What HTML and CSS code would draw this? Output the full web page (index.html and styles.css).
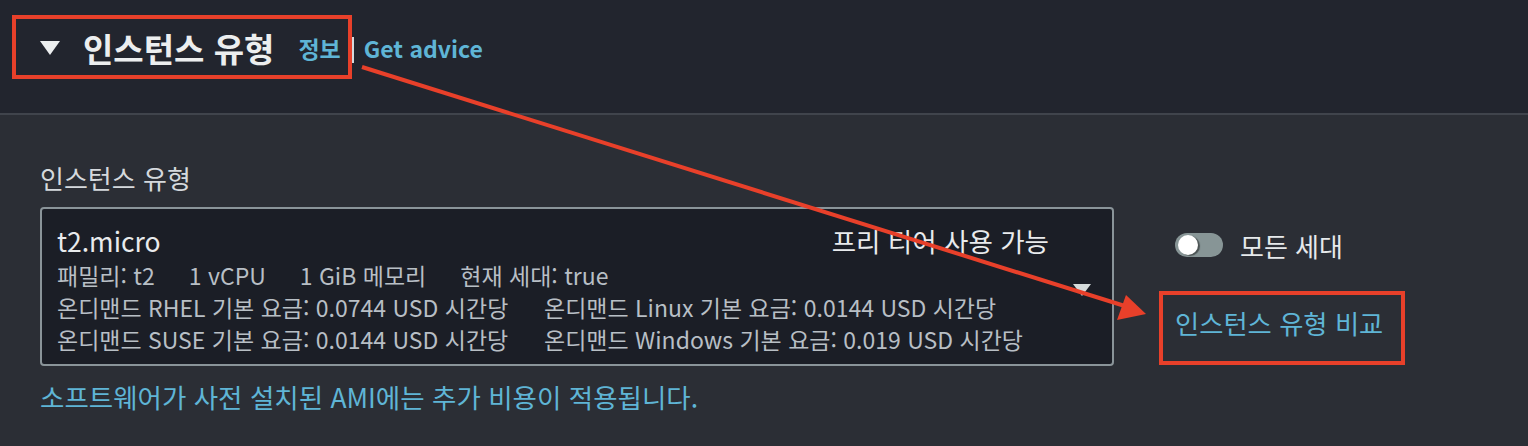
FILE: index.html
```html
<!DOCTYPE html>
<html lang="ko">
<head>
<meta charset="utf-8">
<title>인스턴스 유형</title>
<link rel="stylesheet" href="styles.css">
</head>
<body>
<div class="page">
  <header class="hd">
    <svg class="hd-caret" width="20" height="14" viewBox="0 0 20 14"><polygon points="0,0 20,0 10,14" fill="#eceeef"/></svg>
    <h2 class="hd-title">인스턴스 유형</h2>
    <a class="hd-info">정보</a>
    <span class="hd-sep"></span>
    <a class="hd-advice">Get advice</a>
  </header>
  <section class="content">
    <div class="field-label">인스턴스 유형</div>
    <div class="field-row">
      <div class="select">
        <div class="sel-main">
          <div class="sel-top">
            <span class="sel-name">t2.micro</span>
            <span class="sel-tag">프리 티어 사용 가능</span>
          </div>
          <div class="sel-line specs">
            <span class="spec">패밀리: t2</span>
            <span class="spec">1 vCPU</span>
            <span class="spec">1 GiB 메모리</span>
            <span class="spec">현재 세대: true</span>
          </div>
          <div class="sel-line prices">
            <span>온디맨드 RHEL 기본 요금: 0.0744 USD 시간당</span>
            <span>온디맨드 Linux 기본 요금: 0.0144 USD 시간당</span>
          </div>
          <div class="sel-line prices">
            <span>온디맨드 SUSE 기본 요금: 0.0144 USD 시간당</span>
            <span>온디맨드 Windows 기본 요금: 0.019 USD 시간당</span>
          </div>
        </div>
        <div class="sel-caret">
          <svg width="18" height="12" viewBox="0 0 18 12"><polygon points="0,0 18,0 9,12" fill="#d5dbdb"/></svg>
        </div>
      </div>
      <div class="side">
        <div class="toggle">
          <span class="switch"><span class="knob"></span></span>
          <span class="toggle-text">모든 세대</span>
        </div>
        <a class="compare">인스턴스 유형 비교</a>
      </div>
    </div>
    <p class="note">소프트웨어가 사전 설치된 AMI에는 추가 비용이 적용됩니다.</p>
  </section>
  <svg class="annot" width="1528" height="446" viewBox="0 0 1528 446">
    <rect x="14" y="17" width="336" height="60" fill="none" stroke="#e8402a" stroke-width="4"/>
    <rect x="1161" y="293" width="242" height="70" fill="none" stroke="#e8402a" stroke-width="4"/>
    <line x1="362" y1="67" x2="1128" y2="307" stroke="#e8402a" stroke-width="4"/>
    <polygon points="1146,314 1126,295 1117,320" fill="#e8402a"/>
  </svg>
</div>
</body>
</html>
```

FILE: styles.css
```css
* { box-sizing: border-box; }
html, body {
  margin: 0;
  padding: 0;
  background: #2b2e35;
}
body {
  font-family: "Noto Sans CJK KR", "Noto Sans", sans-serif;
  color: #d5d9dd;
}
.page {
  position: relative;
  width: 1528px;
  height: 446px;
  overflow: hidden;
}
.hd {
  height: 115px;
  background: #22252e;
  border-bottom: 2px solid #40444c;
  display: flex;
  align-items: flex-start;
  padding: 24px 0 0 40px;
}
.hd > * { height: 48px; display: flex; align-items: center; }
.hd-caret { margin-top: 17px; height: 14px; }
.hd-title {
  margin: 0 0 0 23px;
  font-size: 33px;
  font-weight: 700;
  color: #eceeef;
  line-height: 48px;
}
.hd-info {
  margin-left: 24px;
  font-size: 23px;
  font-weight: 700;
  color: #5fb5d6;
}
.hd-sep {
  margin: 13px 0 0 10px;
  width: 3px;
  height: 26px;
  background: #d5d9dd;
}
.hd-advice {
  margin-left: 10px;
  font-size: 23px;
  font-weight: 700;
  color: #5fb5d6;
}
.content {
  padding: 47px 40px 0 40px;
}
.field-label {
  font-size: 26px;
  line-height: 32px;
  color: #d5d9dd;
}
.field-row {
  display: flex;
  margin-top: 13px;
  gap: 61px;
}
.select {
  width: 1074px;
  height: 159px;
  border: 2px solid #8a9499;
  border-radius: 4px;
  background: #1b1e26;
  display: flex;
  padding: 12px 12px 9px 15px;
}
.sel-main { flex: 1; }
.sel-top {
  display: flex;
  justify-content: space-between;
  align-items: center;
  height: 38px;
  padding-right: 15px;
}
.sel-name {
  font-size: 26.5px;
  color: #e9ebed;
}
.sel-tag {
  font-size: 26.5px;
  color: #e9ebed;
}
.sel-line {
  height: 32px;
  line-height: 32px;
  font-size: 23px;
  color: #b8bfc5;
  white-space: nowrap;
}
.specs {
  display: flex;
  gap: 34px;
}
.prices {
  display: grid;
  grid-template-columns: 487px auto;
}
.sel-caret {
  width: 36px;
  display: flex;
  align-items: center;
  justify-content: center;
  padding-top: 4px;
}
.side {
  padding-top: 22px;
  display: flex;
  flex-direction: column;
  align-items: flex-start;
}
.toggle {
  display: flex;
  align-items: center;
  height: 32px;
  gap: 17px;
}
.switch {
  width: 48px;
  height: 24px;
  border-radius: 12px;
  background: #879596;
  position: relative;
  display: block;
}
.knob {
  position: absolute;
  left: 3px;
  top: 2px;
  width: 20px;
  height: 20px;
  border-radius: 50%;
  background: #ffffff;
  box-shadow: 2px 1px 1px rgba(0, 0, 0, 0.45);
}
.toggle-text {
  font-size: 26px;
  color: #e6e9eb;
}
.compare {
  margin-top: 46px;
  font-size: 26.3px;
  line-height: 32px;
  color: #5fb5d6;
}
.note {
  margin: 15px 0 0 0;
  font-size: 26.5px;
  line-height: 32px;
  color: #5fb5d6;
}
.annot {
  position: absolute;
  left: 0;
  top: 0;
  pointer-events: none;
}
```
